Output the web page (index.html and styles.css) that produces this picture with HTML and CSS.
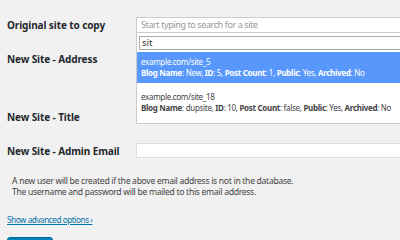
FILE: index.html
```html
<!DOCTYPE html>
<html lang="en">

<head>
    <meta charset="UTF-8">
    <title>Add New Site</title>
    <link rel="stylesheet" href="styles.css">
</head>

<body>
    <div class="page">
        <div class="row row-site">
            <div class="label">Original site to copy</div>
            <div class="field">
                <div class="select">
                    <div class="select-box">Start typing to search for a site</div>
                    <div class="dropdown">
                        <div class="search"><div class="search-input">sit</div></div>
                        <ul class="results">
                            <li class="active">
                                <div>example.com/site_5</div>
                                <div><b>Blog Name</b>: New, <b>ID</b>: 5, <b>Post Count</b>: 1, <b>Public</b>: Yes, <b>Archived</b>: No</div>
                            </li>
                            <li>
                                <div>example.com/site_18</div>
                                <div><b>Blog Name</b>: dupsite, <b>ID</b>: 10, <b>Post Count</b>: false, <b>Public</b>: Yes, <b>Archived</b>: No</div>
                            </li>
                        </ul>
                    </div>
                </div>
            </div>
        </div>

        <div class="row row-address">
            <div class="label">New Site - Address</div>
            <div class="field"><div class="input"></div></div>
        </div>

        <div class="row row-title">
            <div class="label">New Site - Title</div>
            <div class="field"><div class="input"></div></div>
        </div>

        <div class="row row-email">
            <div class="label">New Site - Admin Email</div>
            <div class="field"><div class="input"></div></div>
        </div>

        <p class="note">A new user will be created if the above email address is not in the database.<br>The username and password will be mailed to this email address.</p>

        <a class="advanced" href="#">Show advanced options ›</a>

        <button class="submit">Add Site</button>
    </div>
</body>

</html>
```

FILE: styles.css
```css
* {
    margin: 0;
    padding: 0;
    box-sizing: border-box;
}

body {
    background-color: #f1f1f1;
    font-family: "Noto Sans", "Open Sans", sans-serif;
    color: #23282d;
    overflow: hidden;
}

.page {
    padding: 17px 0 0 7px;
    width: 420px;
}

.row {
    display: grid;
    grid-template-columns: 129px 1fr;
}

.label {
    font-size: 10px;
    font-weight: bold;
    line-height: 13px;
    padding-top: 2px;
    letter-spacing: -0.1px;
    color: #23282d;
}

.input,
.select-box {
    height: 16px;
    background-color: #fff;
    border: 1px solid #ddd;
}

.row-address {
    margin-top: 18px;
}

.row-title {
    margin-top: 42px;
}

.row-email {
    margin-top: 19px;
}

.row-title .input,
.row-email .input {
    height: 15px;
}

/* select2 style dropdown, open */
.select {
    position: relative;
}

.select-box {
    font-size: 9px;
    line-height: 14px;
    letter-spacing: -0.4px;
    color: #999;
    padding-left: 4px;
    border-color: #ccc;
}

.dropdown {
    position: absolute;
    top: 16px;
    left: 0;
    right: 0;
    z-index: 2;
    background-color: #fff;
    border: 1px solid #ccc;
    border-top: none;
}

.search {
    padding: 3px 2px 2px;
}

.search-input {
    height: 14px;
    border: 1px solid #aaa;
    font-size: 9.5px;
    line-height: 12px;
    padding-left: 2px;
    color: #333;
}

.results {
    list-style: none;
    font-size: 8px;
    line-height: 11px;
    letter-spacing: -0.3px;
}

.results li {
    padding: 4px 4px 5px;
    color: #444;
}

.results li + li {
    padding: 8px 4px 10px;
}

.results li.active {
    background-color: #5897fb;
    color: #fff;
}

.note {
    margin-top: 18px;
    padding-left: 5px;
    font-size: 8.6px;
    line-height: 11px;
    letter-spacing: -0.3px;
    color: #444;
}

.advanced {
    display: block;
    margin-top: 16px;
    font-size: 8.2px;
    line-height: 11px;
    letter-spacing: -0.45px;
    color: #0073aa;
}

.submit {
    display: block;
    margin-top: 12px;
    width: 46px;
    height: 24px;
    background-color: #0085ba;
    border: 1px solid #006799;
    border-radius: 3px;
    color: #fff;
    font-family: inherit;
    font-size: 9px;
}
```
